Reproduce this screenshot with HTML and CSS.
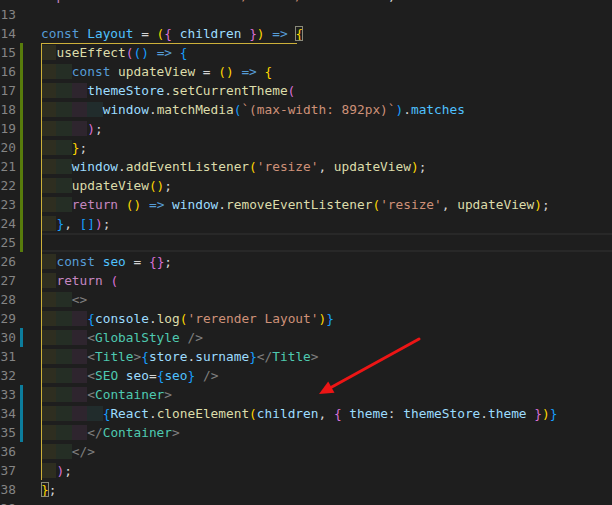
FILE: index.html
```html
<!DOCTYPE html>
<html>
<head>
  <title>Layout.js</title>
  <link rel="stylesheet" href="styles.css">
</head>
<body>
  <div class="editor">
    <div class="line"><span class="ln">12</span><span class="gm"></span><span class="code"><span class="c">import</span> <span class="v">themeStore</span> <span class="c">from</span> <span class="s">'../stores/ThemeStore'</span>;</span></div>
    <div class="line"><span class="ln">13</span><span class="gm"></span><span class="code"></span></div>
    <div class="line"><span class="ln">14</span><span class="gm"></span><span class="code"><span class="k">const</span> <span class="n">Layout</span> = <span class="b1">(</span><span class="b2">{</span> <span class="v">children</span> <span class="b2">}</span><span class="b1">)</span> <span class="k">=&gt;</span> <span class="b1 match">{</span></span></div>

    <!-- body of Layout, bracket guide on the left -->
    <div class="scope">
      <div class="line"><span class="ln">15</span><span class="gm add"></span><span class="code"><span class="i1">  </span><span class="f">useEffect</span><span class="b2">(</span><span class="b3">()</span> <span class="k">=&gt;</span> <span class="b3">{</span></span></div>
      <div class="line"><span class="ln">16</span><span class="gm add"></span><span class="code"><span class="i1">  </span><span class="i2">  </span><span class="k">const</span> <span class="f">updateView</span> = <span class="b1">()</span> <span class="k">=&gt;</span> <span class="b1">{</span></span></div>
      <div class="line"><span class="ln">17</span><span class="gm add"></span><span class="code"><span class="i1">  </span><span class="i2">  </span><span class="i3">  </span><span class="v">themeStore</span>.<span class="f">setCurrentTheme</span><span class="b2">(</span></span></div>
      <div class="line"><span class="ln">18</span><span class="gm add"></span><span class="code"><span class="i1">  </span><span class="i2">  </span><span class="i3">  </span><span class="i4">  </span><span class="v">window</span>.<span class="f">matchMedia</span><span class="b3">(</span><span class="s">`(max-width: 892px)`</span><span class="b3">)</span>.<span class="n">matches</span></span></div>
      <div class="line"><span class="ln">19</span><span class="gm add"></span><span class="code"><span class="i1">  </span><span class="i2">  </span><span class="i3">  </span><span class="b2">)</span>;</span></div>
      <div class="line"><span class="ln">20</span><span class="gm add"></span><span class="code"><span class="i1">  </span><span class="i2">  </span><span class="b1">}</span>;</span></div>
      <div class="line"><span class="ln">21</span><span class="gm add"></span><span class="code"><span class="i1">  </span><span class="i2">  </span><span class="v">window</span>.<span class="f">addEventListener</span><span class="b1">(</span><span class="s">'resize'</span>, <span class="f">updateView</span><span class="b1">)</span>;</span></div>
      <div class="line"><span class="ln">22</span><span class="gm add"></span><span class="code"><span class="i1">  </span><span class="i2">  </span><span class="f">updateView</span><span class="b1">()</span>;</span></div>
      <div class="line"><span class="ln">23</span><span class="gm add"></span><span class="code"><span class="i1">  </span><span class="i2">  </span><span class="c">return</span> <span class="b1">()</span> <span class="k">=&gt;</span> <span class="v">window</span>.<span class="f">removeEventListener</span><span class="b1">(</span><span class="s">'resize'</span>, <span class="f">updateView</span><span class="b1">)</span>;</span></div>
      <div class="line"><span class="ln">24</span><span class="gm add"></span><span class="code"><span class="i1">  </span><span class="b3">}</span>, <span class="b3">[]</span><span class="b2">)</span>;</span></div>
      <div class="line current"><span class="ln">25</span><span class="gm add"></span><span class="code"></span></div>
      <div class="line"><span class="ln">26</span><span class="gm"></span><span class="code"><span class="i1">  </span><span class="k">const</span> <span class="n">seo</span> = <span class="b2">{}</span>;</span></div>
      <div class="line"><span class="ln">27</span><span class="gm"></span><span class="code"><span class="i1">  </span><span class="c">return</span> <span class="b2">(</span></span></div>
      <div class="line"><span class="ln">28</span><span class="gm"></span><span class="code"><span class="i1">  </span><span class="i2">  </span><span class="g">&lt;&gt;</span></span></div>
      <div class="line"><span class="ln">29</span><span class="gm"></span><span class="code"><span class="i1">  </span><span class="i2">  </span><span class="i3">  </span><span class="b3">{</span><span class="v">console</span>.<span class="f">log</span><span class="b1">(</span><span class="s">'rerender Layout'</span><span class="b1">)</span><span class="b3">}</span></span></div>
      <div class="line"><span class="ln">30</span><span class="gm mod"></span><span class="code"><span class="i1">  </span><span class="i2">  </span><span class="i3">  </span><span class="g">&lt;</span><span class="t">GlobalStyle</span> <span class="g">/&gt;</span></span></div>
      <div class="line"><span class="ln">31</span><span class="gm"></span><span class="code"><span class="i1">  </span><span class="i2">  </span><span class="i3">  </span><span class="g">&lt;</span><span class="t">Title</span><span class="g">&gt;</span><span class="b3">{</span><span class="v">store</span>.<span class="v">surname</span><span class="b3">}</span><span class="g">&lt;/</span><span class="t">Title</span><span class="g">&gt;</span></span></div>
      <div class="line"><span class="ln">32</span><span class="gm"></span><span class="code"><span class="i1">  </span><span class="i2">  </span><span class="i3">  </span><span class="g">&lt;</span><span class="t">SEO</span> <span class="v">seo</span>=<span class="b3">{</span><span class="n">seo</span><span class="b3">}</span> <span class="g">/&gt;</span></span></div>
      <div class="line"><span class="ln">33</span><span class="gm mod"></span><span class="code"><span class="i1">  </span><span class="i2">  </span><span class="i3">  </span><span class="g">&lt;</span><span class="t">Container</span><span class="g">&gt;</span></span></div>
      <div class="line"><span class="ln">34</span><span class="gm mod"></span><span class="code"><span class="i1">  </span><span class="i2">  </span><span class="i3">  </span><span class="i4">  </span><span class="b3">{</span><span class="v">React</span>.<span class="f">cloneElement</span><span class="b1">(</span><span class="v">children</span>, <span class="b2">{</span> <span class="v">theme</span>: <span class="v">themeStore</span>.<span class="v">theme</span> <span class="b2">}</span><span class="b1">)</span><span class="b3">}</span></span></div>
      <div class="line"><span class="ln">35</span><span class="gm mod"></span><span class="code"><span class="i1">  </span><span class="i2">  </span><span class="i3">  </span><span class="g">&lt;/</span><span class="t">Container</span><span class="g">&gt;</span></span></div>
      <div class="line"><span class="ln">36</span><span class="gm"></span><span class="code"><span class="i1">  </span><span class="i2">  </span><span class="g">&lt;/&gt;</span></span></div>
      <div class="line"><span class="ln">37</span><span class="gm"></span><span class="code"><span class="i1">  </span><span class="b2">)</span>;</span></div>
    </div>

    <div class="line"><span class="ln">38</span><span class="gm"></span><span class="code"><span class="b1 match">}</span>;</span></div>
    <div class="line"><span class="ln">39</span><span class="gm"></span><span class="code"></span></div>
  </div>

  <!-- red annotation arrow -->
  <svg class="arrow" width="130" height="90" viewBox="0 0 130 90">
    <line x1="119" y1="19" x2="30" y2="68" stroke="#ec1515" stroke-width="3" stroke-linecap="round"/>
    <polygon points="19,74 34.5,72.8 28.2,61.6" fill="#ec1515"/>
  </svg>
</body>
</html>
```

FILE: styles.css
```css
body {
  margin: 0;
  background-color: #1e1e1e;
  overflow: hidden;
  font-family: "DejaVu Sans Mono", "Liberation Mono", monospace;
  font-size: 12.8px;
  color: #d4d4d4;
}

.editor {
  margin-top: -14px;
}

.line {
  display: flex;
  height: 19px;
  line-height: 19px;
}

.ln {
  flex: none;
  width: 16px;
  text-align: right;
  color: #858585;
}

/* git gutter marks */
.gm {
  flex: none;
  width: 3px;
  margin: 0 18px 0 4px;
}

.gm.add {
  background-color: #587c0c;
}

.gm.mod {
  background-color: #0c7d9d;
}

.code {
  flex: 1;
  white-space: pre;
}

.current .code {
  box-shadow: inset 0 2px #282828, inset 0 -2px #282828;
}

/* active bracket pair guide */
.scope {
  position: relative;
}

.scope::before {
  content: "";
  position: absolute;
  left: 41px;
  top: 0;
  bottom: 0;
  width: 1px;
  background-color: #cdb03a;
}

.scope::after {
  content: "";
  position: absolute;
  left: 41px;
  top: 0;
  width: 256px;
  height: 1px;
  background-color: #cdb03a;
}

.match {
  outline: 1px solid #8a8a7a;
  outline-offset: -1px;
}

/* indent rainbow */
.i1 { background-color: #2e2e20; }
.i2 { background-color: #252e25; }
.i3 { background-color: #2e252e; }
.i4 { background-color: #212c2c; }

/* syntax */
.k { color: #569cd6; }
.c { color: #c586c0; }
.f { color: #dcdcaa; }
.v { color: #9cdcfe; }
.n { color: #4fc1ff; }
.s { color: #ce9178; }
.t { color: #4ec9b0; }
.g { color: #808080; }
.b1 { color: #ffd700; }
.b2 { color: #da70d6; }
.b3 { color: #179fff; }

.arrow {
  position: absolute;
  left: 300px;
  top: 320px;
}
```
